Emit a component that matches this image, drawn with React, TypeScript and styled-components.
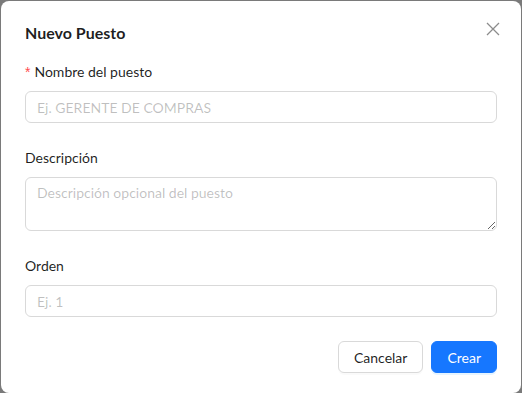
import React from "react";
import styled, { createGlobalStyle } from "styled-components";

const Global = createGlobalStyle`
  html, body { margin: 0; padding: 0; background: #7a7a7a; }
  body { font-family: Lato, "Noto Sans", sans-serif; }
  * { box-sizing: border-box; }
`;

const Overlay = styled.div`
  width: 522px;
  height: 393px;
  padding: 1px 1px 0 1px;
  background: #7a7a7a;
  display: flex;
`;

const Modal = styled.div`
  flex: 1;
  background: #fff;
  border-radius: 8px;
  padding: 20px 24px 20px 24px;
  position: relative;
  display: flex;
  flex-direction: column;
  font-size: 14px;
  color: rgba(0, 0, 0, 0.88);
`;

const Title = styled.div`
  font-size: 16px;
  font-weight: 700;
  line-height: 24px;
  margin-bottom: 16px;
`;

const Close = styled.button`
  position: absolute;
  top: 17px;
  right: 17px;
  width: 22px;
  height: 22px;
  border: none;
  background: transparent;
  padding: 0;
  display: flex;
  align-items: center;
  justify-content: center;
  color: rgba(0, 0, 0, 0.45);
`;

const Item = styled.div`
  display: flex;
  flex-direction: column;
  margin-bottom: 24px;
`;

const Label = styled.label`
  line-height: 22px;
  padding-bottom: 8px;
  font-size: 14px;
`;

const Req = styled.span`
  color: #ff4d4f;
  margin-right: 4px;
  font-family: SimSun, sans-serif;
`;

const Input = styled.input`
  height: 32px;
  border: 1px solid #d9d9d9;
  border-radius: 6px;
  padding: 4px 11px;
  font-family: inherit;
  font-size: 14px;
  outline: none;
  &::placeholder { color: rgba(0, 0, 0, 0.25); }
`;

const TextArea = styled.textarea`
  height: 54px;
  border: 1px solid #d9d9d9;
  border-radius: 6px;
  padding: 4px 11px;
  font-family: inherit;
  font-size: 14px;
  line-height: 22px;
  resize: vertical;
  outline: none;
  &::placeholder { color: rgba(0, 0, 0, 0.25); }
`;

const Footer = styled.div`
  display: flex;
  justify-content: flex-end;
  gap: 8px;
`;

const Button = styled.button<{ $primary?: boolean }>`
  height: 32px;
  padding: 4px 15px;
  border-radius: 6px;
  font-family: inherit;
  font-size: 14px;
  border: 1px solid ${(p) => (p.$primary ? "#1677ff" : "#d9d9d9")};
  background: ${(p) => (p.$primary ? "#1677ff" : "#fff")};
  color: ${(p) => (p.$primary ? "#fff" : "rgba(0,0,0,0.88)")};
  box-shadow: ${(p) => (p.$primary ? "0 2px 0 rgba(5,145,255,0.1)" : "0 2px 0 rgba(0,0,0,0.02)")};
`;

export default function App() {
  return (
    <>
      <Global />
      <Overlay>
        <Modal>
          <Title>Nuevo Puesto</Title>
          <Close aria-label="Cerrar">
            <svg width="14" height="14" viewBox="0 0 14 14">
              <path d="M1 1 L13 13 M13 1 L1 13" stroke="currentColor" strokeWidth="1.3" fill="none" />
            </svg>
          </Close>
          <Item>
            <Label><Req>*</Req>Nombre del puesto</Label>
            <Input placeholder="Ej. GERENTE DE COMPRAS" />
          </Item>
          <Item>
            <Label>Descripción</Label>
            <TextArea placeholder="Descripción opcional del puesto" />
          </Item>
          <Item>
            <Label>Orden</Label>
            <Input placeholder="Ej. 1" />
          </Item>
          <Footer>
            <Button>Cancelar</Button>
            <Button $primary>Crear</Button>
          </Footer>
        </Modal>
      </Overlay>
    </>
  );
}
